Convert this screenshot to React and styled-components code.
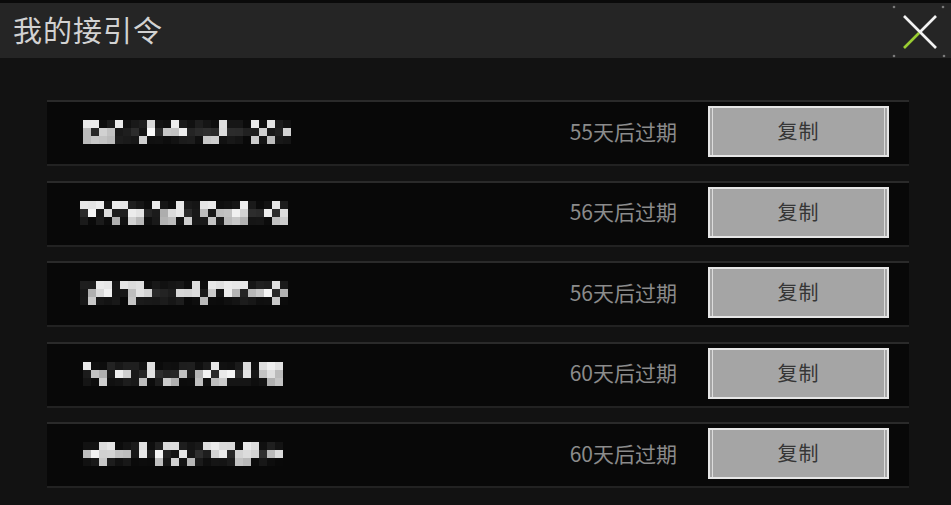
import React from "react";
import styled, { createGlobalStyle } from "styled-components";

const GlobalStyle = createGlobalStyle`
  html, body {
    margin: 0;
    padding: 0;
    background: #111111;
  }
  * {
    box-sizing: border-box;
  }
`;

const Page = styled.div`
  width: 951px;
  height: 505px;
  overflow: hidden;
  background: #121212;
  display: flex;
  flex-direction: column;
  font-family: "Noto Sans CJK SC", "Noto Sans", sans-serif;
  border-top: 3px solid #0a0a0a;
`;

const Header = styled.div`
  height: 55px;
  flex-shrink: 0;
  background: #252525;
  display: flex;
  align-items: center;
  justify-content: space-between;
  padding-left: 13px;
`;

const Title = styled.div`
  font-size: 29px;
  color: #d2d2d2;
  letter-spacing: 1px;
  line-height: 1;
  margin-top: -2px;
`;

const CloseButton = styled.div`
  width: 58px;
  height: 55px;
  display: flex;
  align-items: center;
  justify-content: center;
  margin-right: 3px;
`;

const List = styled.div`
  display: flex;
  flex-direction: column;
  gap: 14.5px;
  padding: 42px 42px 0 47px;
`;

const Row = styled.div`
  height: 66px;
  flex-shrink: 0;
  display: flex;
  align-items: center;
  background: #080808;
  border-top: 2px solid #2a2a2a;
  border-bottom: 2px solid #222222;
  padding: 0 20px 0 ${(p) => p.$indent}px;
`;

const Mosaic = styled.div`
  flex: 1;
  display: grid;
  grid-template-columns: repeat(${(p) => p.$cols}, 8px);
  grid-auto-rows: 8px;
  margin-top: -2px;
`;

const Cell = styled.span`
  background: ${(p) => p.$tone};
`;

const Expiry = styled.div`
  font-size: 21px;
  color: #8b8b8b;
  margin-right: 31px;
  margin-top: -4px;
  line-height: 1;
`;

const CopyButton = styled.div`
  width: 181px;
  height: 51px;
  margin-top: -3px;
  padding-bottom: 2px;
  background: #a5a5a5;
  border: 2px solid #e6e6e6;
  box-shadow: inset 2px 0 0 #a5a5a5, inset 3px 0 0 #dcdcdc, inset -2px 0 0 #a5a5a5,
    inset -3px 0 0 #dcdcdc;
  display: flex;
  align-items: center;
  justify-content: center;
  font-size: 20px;
  color: #363636;
  letter-spacing: 1px;
`;

const CloseIcon = () => (
  <svg width="56" height="54" viewBox="0 0 56 54">
    <circle cx="3" cy="3" r="1.3" fill="#7a7a7a" />
    <circle cx="52" cy="3" r="1.3" fill="#7a7a7a" />
    <circle cx="3" cy="52" r="1.3" fill="#7a7a7a" />
    <circle cx="53" cy="52" r="1.3" fill="#7a7a7a" />
    <line x1="13" y1="12" x2="45" y2="44" stroke="#f2f2f2" strokeWidth="2.6" />
    <line x1="45" y1="12" x2="28" y2="29" stroke="#f2f2f2" strokeWidth="2.6" />
    <line x1="28" y1="29" x2="13" y2="44" stroke="#9acd32" strokeWidth="2.6" />
  </svg>
);

// deterministic pseudo-random mosaic for the blurred codes
const makeTones = (seed, cols) => {
  let s = seed;
  const next = () => {
    s = (s * 9301 + 49297) % 233280;
    return s / 233280;
  };
  const tones = [];
  for (let r = 0; r < 3; r++) {
    for (let c = 0; c < cols; c++) {
      const v = next();
      let g;
      if (r === 0) g = v > 0.62 ? 180 + v * 60 : 10 + v * 40;
      else if (r === 1) g = v > 0.45 ? 110 + v * 140 : 20 + v * 60;
      else g = v > 0.7 ? 90 + v * 120 : 8 + v * 30;
      g = Math.round(g);
      tones.push(`rgb(${g},${g},${g})`);
    }
  }
  return tones;
};

const codes = [
  { seed: 17, cols: 26, indent: 36, days: 55 },
  { seed: 91, cols: 26, indent: 33, days: 56 },
  { seed: 233, cols: 26, indent: 33, days: 56 },
  { seed: 418, cols: 25, indent: 36, days: 60 },
  { seed: 777, cols: 25, indent: 36, days: 60 },
];

export default function App() {
  return (
    <>
      <GlobalStyle />
      <Page>
        <Header>
          <Title>我的接引令</Title>
          <CloseButton>
            <CloseIcon />
          </CloseButton>
        </Header>
        <List>
          {codes.map((c, i) => (
            <Row key={i} $indent={c.indent}>
              <Mosaic $cols={c.cols}>
                {makeTones(c.seed, c.cols).map((t, j) => (
                  <Cell key={j} $tone={t} />
                ))}
              </Mosaic>
              <Expiry>{c.days}天后过期</Expiry>
              <CopyButton>复制</CopyButton>
            </Row>
          ))}
        </List>
      </Page>
    </>
  );
}
